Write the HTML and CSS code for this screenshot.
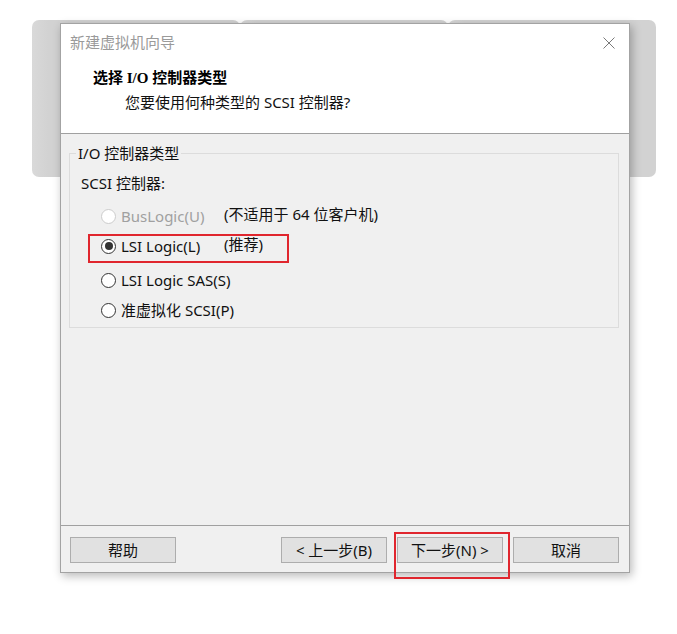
FILE: index.html
```html
<!DOCTYPE html>
<html lang="zh-CN">
<head>
<meta charset="utf-8">
<title>新建虚拟机向导</title>
<link rel="stylesheet" href="styles.css">
</head>
<body>
<div class="stage">
  <div class="backdrop">
    <div class="card"></div>
    <div class="card"></div>
    <div class="card"></div>
  </div>
  <div class="dialog">
    <div class="titlebar">
      <span class="title">新建虚拟机向导</span>
      <svg class="close" width="12" height="12" viewBox="0 0 12 12"><path d="M0.5 0.5 L11.5 11.5 M11.5 0.5 L0.5 11.5" stroke="#7a7a7a" stroke-width="1" fill="none"/></svg>
    </div>
    <div class="header">
      <div class="heading">选择 I/O 控制器类型</div>
      <div class="subheading">您要使用何种类型的 SCSI 控制器?</div>
    </div>
    <div class="content">
      <fieldset class="group">
        <legend>I/O 控制器类型</legend>
        <div class="sublabel">SCSI 控制器:</div>
        <div class="options">
          <div class="opt disabled r1"><span class="radio"></span><span>BusLogic(U)</span></div>
          <div class="note r1">(不适用于 64 位客户机)</div>
          <div class="opt r2"><span class="radio checked"></span><span>LSI Logic(L)</span></div>
          <div class="note r2">(推荐)</div>
          <div class="opt r3"><span class="radio"></span><span>LSI Logic SAS(S)</span></div>
          <div class="opt r4"><span class="radio"></span><span>准虚拟化 SCSI(P)</span></div>
        </div>
      </fieldset>
    </div>
    <div class="footer">
      <button class="btn">帮助</button>
      <div class="spacer"></div>
      <button class="btn">&lt; 上一步(B)</button>
      <button class="btn">下一步(N) &gt;</button>
      <button class="btn">取消</button>
    </div>
  </div>
  <div class="mark mark-lsi"></div>
  <div class="mark mark-next"></div>
</div>
</body>
</html>
```
FILE: styles.css
```css
* { box-sizing: border-box; }
html, body { margin: 0; padding: 0; background: #ffffff; }
body {
  font-family: "Noto Sans", "Noto Sans CJK SC", sans-serif;
  font-size: 15px;
  color: #111111;
}
.stage {
  position: relative;
  width: 677px;
  height: 634px;
  display: grid;
  grid-template-columns: 1fr;
  grid-template-rows: auto;
  align-items: start;
  justify-items: start;
}
.backdrop {
  grid-area: 1 / 1;
  margin: 20px 0 0 32px;
  width: 624px;
  height: 157px;
  display: flex;
}
.card {
  flex: 1;
  height: 100%;
  background: linear-gradient(90deg, #d9d9d9 0%, #d2d2d2 8%, #d2d2d2 100%);
  border-radius: 7px 7px 0 0;
}
.card:first-child { border-radius: 7px 7px 0 7px; }
.card:last-child { border-radius: 7px 7px 7px 0; }
.dialog {
  grid-area: 1 / 1;
  position: relative;
  z-index: 1;
  margin: 23px 0 0 60px;
  width: 570px;
  height: 550px;
  border: 1px solid #a3a3a3;
  background: #f0f0f0;
  box-shadow: 2px 3px 9px rgba(0,0,0,0.28);
  display: flex;
  flex-direction: column;
}
.titlebar {
  height: 36px;
  background: #fff;
  display: flex;
  align-items: center;
  justify-content: space-between;
  padding: 0 14px 0 9px;
}
.title { color: #9a9a9a; line-height: 20px; }
.close { display: block; margin-top: 1px; }
.header {
  background: #fff;
  padding: 8px 0 21px 0;
  border-bottom: 1px solid #a0a0a0;
}
.heading {
  font-family: "Liberation Serif", "Noto Sans CJK SC", serif;
  font-weight: bold;
  line-height: 20px;
  padding-left: 32px;
  color: #000;
}
.subheading {
  line-height: 20px;
  margin-top: 4px;
  padding-left: 64px;
}
.content {
  flex: 1;
  padding: 9px 10px 0 8px;
  border-bottom: 1px solid #a0a0a0;
}
.group {
  margin: 0;
  padding: 0 0 7px 11px;
  border: 1px solid #dcdcdc;
  min-width: 0;
}
.group legend {
  padding: 0 2px;
  margin-left: -5px;
  line-height: 20px;
}
.sublabel {
  line-height: 20px;
  margin-top: 10px;
}
.options {
  margin-top: 13px;
  margin-left: 20px;
  display: grid;
  grid-template-columns: 123px auto;
  row-gap: 10px;
}
.options .r1 { grid-row: 1; }
.options .r2 { grid-row: 2; }
.options .r3 { grid-row: 3; grid-column: 1 / 3; margin-top: 4px; }
.options .r4 { grid-row: 4; grid-column: 1 / 3; }
.opt {
  display: flex;
  align-items: center;
  gap: 5px;
  line-height: 20px;
  white-space: nowrap;
}
.note { line-height: 20px; white-space: nowrap; margin-top: -2px; }
.radio {
  width: 15px;
  height: 15px;
  border-radius: 50%;
  border: 1px solid #333;
  background: #fff;
  display: flex;
  align-items: center;
  justify-content: center;
  flex: none;
}
.radio.checked::after {
  content: "";
  width: 8px;
  height: 8px;
  border-radius: 50%;
  background: #333;
}
.opt.disabled { color: #a0a0a0; }
.opt.disabled .radio { border-color: #cccccc; }
.footer {
  height: 46px;
  display: flex;
  align-items: flex-start;
  gap: 10px;
  padding: 11px 10px 0 9px;
}
.spacer { flex: 1; }
.btn {
  width: 106px;
  height: 26px;
  border: 1px solid #adadad;
  background: #e1e1e1;
  font-family: "Noto Sans", "Noto Sans CJK SC", sans-serif;
  font-size: 15px;
  color: #111111;
  padding: 0;
  line-height: 22px;
}
.mark {
  position: absolute;
  z-index: 2;
  border: 2px solid #e0262e;
}
.mark-lsi { left: 88px; top: 234px; width: 201px; height: 29px; }
.mark-next { left: 394px; top: 532px; width: 116px; height: 47px; }
```
